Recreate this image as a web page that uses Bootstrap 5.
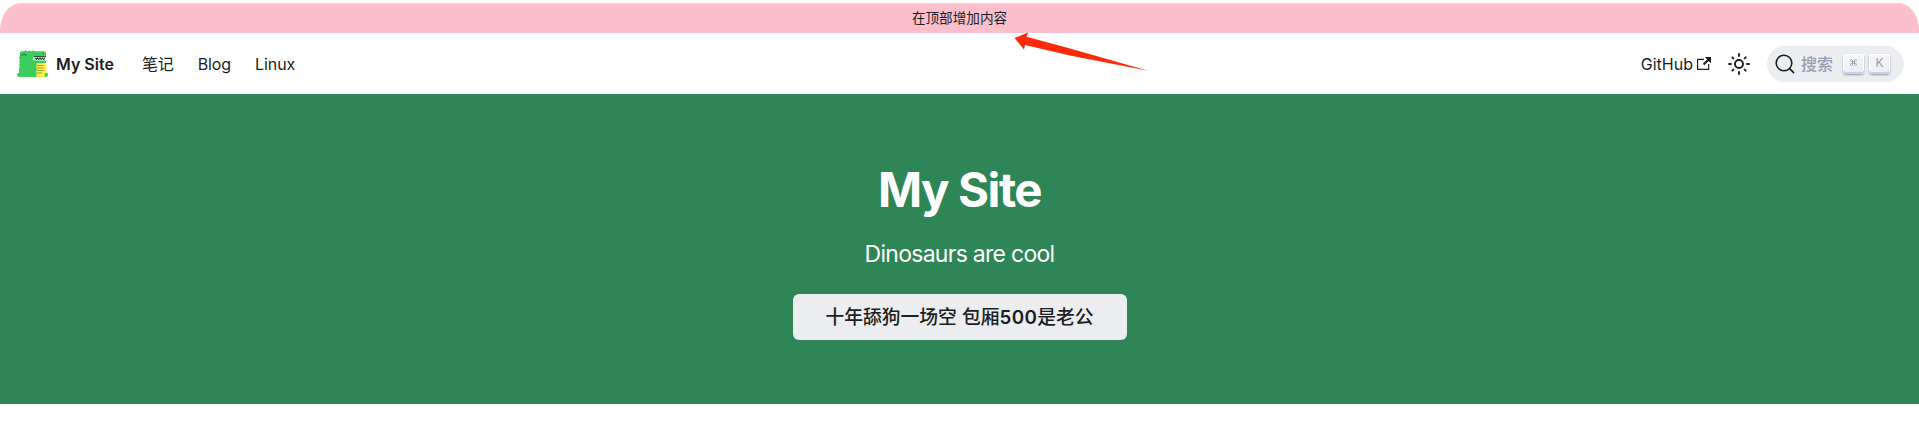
<!DOCTYPE html>
<html lang="zh-CN">
<head>
<meta charset="utf-8">
<meta name="viewport" content="width=device-width, initial-scale=1">
<title>My Site</title>
<link href="https://cdn.jsdelivr.net/npm/bootstrap@5.3.0/dist/css/bootstrap.min.css" rel="stylesheet">
<style>
body { font-family: Inter, "Noto Sans CJK SC", sans-serif; color: #1c1e21; background: #fff; overflow: hidden; }
.announce { height: 30px; margin-top: 3px; border-top: 1px solid #dcdcdc; background: #fcbfcb; border-radius: 20px 20px 0 0 / 28px 28px 0 0; font-size: 13.6px; line-height: 28px; }
.site-nav { height: 61px; padding: 0 15px 0 16px; font-size: 16px; line-height: 24px; }
.site-nav a { color: #1c1e21; text-decoration: none; white-space: nowrap; }
.site-nav .navbar-brand { font-size: 16px; font-weight: 600; margin-right: 28px; padding: 0; }
.brand-mark { margin-right: 7px; }
.nav-set { gap: 24px; letter-spacing: -.1px; }
.sun { margin: 0 16px; }
.search-pill { width: 137px; height: 36px; border-radius: 18px; background: #ebedf0; padding: 0 12px 0 8px; color: #969faf; border: 0; font-weight: 500; }
.search-label { margin: 0 10px 0 6px; }
.keycap { width: 21px; height: 20px; border-radius: 3px; background: linear-gradient(-26.5deg, #e9ebf2, #f8f8fa); box-shadow: inset 0 -2px 0 #cdcde6, inset 0 0 1px 1px #fff, 0 1px 2px 0 rgba(30,35,90,.4); font-size: 12px; font-weight: 400; line-height: 17px; text-align: center; }
.cmd-glyph { margin: 5px auto 0; }
.site-hero { height: 310px; background: #2e8555; color: #fff; padding-top: 65px; }
.site-hero h1 { font-size: 47.4px; font-weight: 700; letter-spacing: -1.45px; line-height: 61px; margin: 0 0 16px; }
.site-hero p { font-size: 23px; letter-spacing: -.72px; line-height: 36px; margin: 0 0 22px; }
.cta { width: 334px; height: 46px; border-radius: 6px; background: #ebedf0; color: #1c1e21; font-size: 18.8px; font-weight: 500; line-height: 48px; padding: 0; border: 0; }
.cta-num { font-weight: 600; letter-spacing: .4px; }
.pointer-arrow { left: 1010px; top: 30px; }
</style>
</head>
<body>
<div class="announce text-center">在顶部增加内容</div>
<nav class="site-nav d-flex align-items-center justify-content-between">
  <div class="d-flex align-items-center">
    <a class="navbar-brand d-flex align-items-center" href="#">
      <svg class="brand-mark" width="33" height="30" viewBox="0 0 33 30" aria-hidden="true">
        <path fill="#3ecc5f" d="M4 6Q3 3 6 2l2 .5L9.500 1l1.500 1.500L13 1.500l1.500 1L17 1.500l2 .7h9q2 0 2 2V14H27v14H4q-3 0-3-3.500l2-.5V19l1-1-1-2 1-2-1-2 1-1-1-2Z"/>
        <path fill="none" stroke="#116433" stroke-width="1" d="m5.500 6.800 2.500-2 2.500 2"/>
        <path fill="#fff" d="M18 8h13v3.500H20Q17 11.500 17 9.800 17 8 18 8"/>
        <path fill="none" stroke="#26382e" stroke-width="1.100" d="M18 7.700h12M19 9l1.200 1.500L21.500 9l1.200 1.500L24 9l1.200 1.500L26.500 9l1.200 1.500L29 9"/>
        <path fill="#ffed4a" d="M20.500 14h8.500q1.500 0 1.500 1.500V26q0 2.500-2.500 2.500h-7.500v-6l-3-1 3-1Z"/>
        <path fill="none" stroke="#8b8428" stroke-width=".8" d="M21 16.500h6.500M21 19h6.500M21 21.500h6.500M21 24h5"/>
        <path fill="#3ecc5f" d="M16 18.500q3-.5 5 1.500l-1 2.500h-4m13 1.500q3-1 3 2 0 2-2 2h-1.500"/>
        <circle cx="27.500" cy="4.500" r=".6" fill="#17542b"/>
      </svg>
      <span>My Site</span>
    </a>
    <div class="d-flex nav-set"><a href="#">笔记</a><a href="#">Blog</a><a href="#">Linux</a></div>
  </div>
  <div class="d-flex align-items-center">
    <a class="d-flex align-items-center" href="#">GitHub
      <svg class="ms-1" width="14" height="15" viewBox="0 0 24 24" aria-hidden="true"><path fill="currentColor" d="M21 13v10H0V4h12v2H2v15h17v-8h2Zm3-12H13.500l4 4L10 12.500l2.500 2.500L20 7.500l4 4V1Z"/></svg>
    </a>
    <svg class="sun" width="24" height="24" viewBox="0 0 24 24" fill="none" stroke="#1c1e21" stroke-width="1.900" stroke-linecap="round" aria-hidden="true"><circle cx="12" cy="12" r="4"/><path d="M12 2v2m0 16v2M2 12h2m16 0h2M5.300 5.300l1.100 1.100m11.200 11.200 1.100 1.100m0-13.400-1.100 1.100M6.400 17.600l-1.100 1.100"/></svg>
    <button class="search-pill d-flex align-items-center" type="button">
      <svg width="20" height="20" viewBox="0 0 20 20" aria-hidden="true" fill="none" stroke="#1c1e21" stroke-width="1.600" stroke-linecap="round"><circle cx="9" cy="9" r="7.800"/><path d="m14.600 14.600 4 4"/></svg>
      <span class="search-label">搜索</span>
      <span class="d-flex" style="gap:5px">
        <span class="keycap"><svg class="cmd-glyph d-block" width="7" height="7" viewBox="0 0 14 14" fill="none" stroke="#969faf" stroke-width="1.700" aria-hidden="true"><path d="M5 5H3a2 2 0 1 1 2-2v8a2 2 0 1 1-2-2h8a2 2 0 1 1-2 2V3a2 2 0 1 1 2 2H5"/></svg></span>
        <span class="keycap">K</span>
      </span>
    </button>
  </div>
</nav>
<header class="site-hero text-center">
  <h1>My Site</h1>
  <p>Dinosaurs are cool</p>
  <a class="btn cta" href="#">十年舔狗一场空 包厢<span class="cta-num">500</span>是老公</a>
</header>
<svg class="pointer-arrow position-absolute" width="142" height="44" viewBox="0 0 142 44" aria-hidden="true"><path fill="#fb2a08" d="M4.500 8 18 2.500l-1.500 4.300L60 18.500l78 22.300L60 25.500 15 15l-1 4.500Z"/></svg>
<script src="https://cdn.jsdelivr.net/npm/bootstrap@5.3.0/dist/js/bootstrap.bundle.min.js"></script>
</body>
</html>
